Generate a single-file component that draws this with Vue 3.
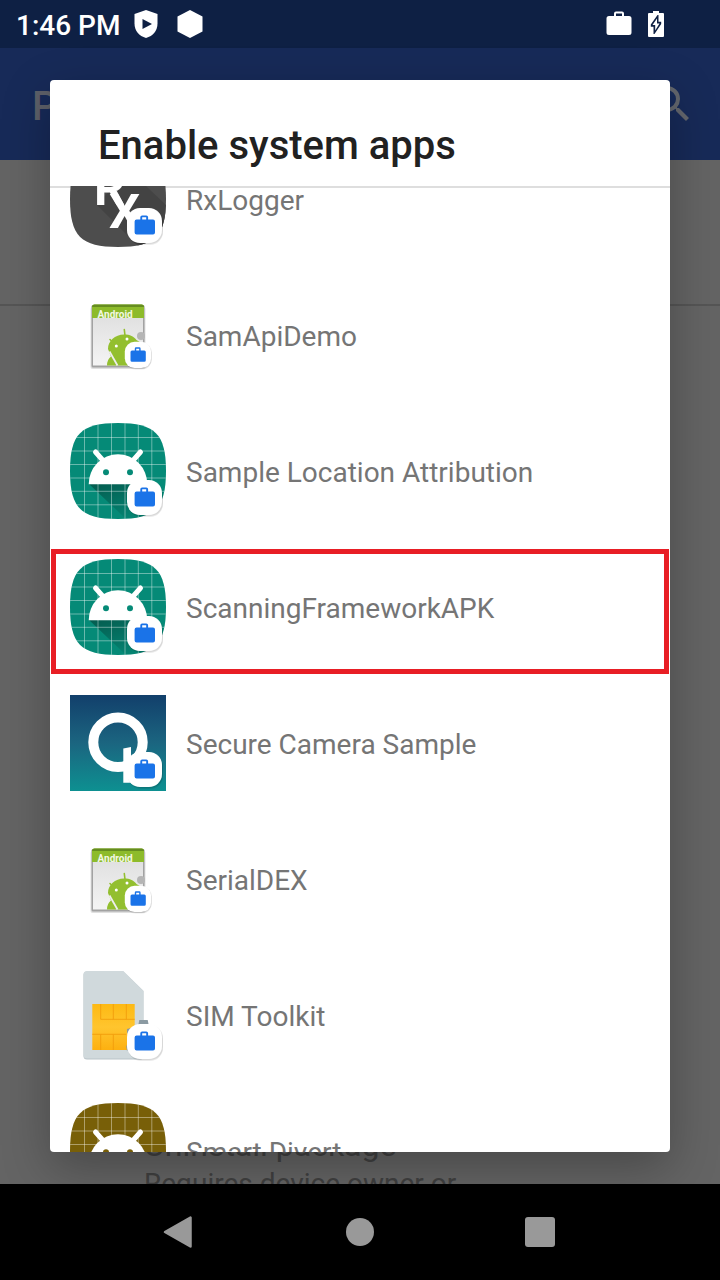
<script setup>
const apps = [
  { name: 'RxLogger', icon: 'rx' },
  { name: 'SamApiDemo', icon: 'doc' },
  { name: 'Sample Location Attribution', icon: 'robot', color: '#058a77' },
  { name: 'ScanningFrameworkAPK', icon: 'robot', color: '#058a77', marked: true },
  { name: 'Secure Camera Sample', icon: 'camera' },
  { name: 'SerialDEX', icon: 'doc' },
  { name: 'SIM Toolkit', icon: 'sim' },
  { name: 'Smart Divert', icon: 'robot', color: '#785f08' }
]
const gridLines = [14.5, 28, 41.5, 55, 68.3, 81.8]
</script>

<template>
  <div class="screen">
    <svg class="defs" aria-hidden="true">
      <defs>
        <clipPath id="squircle">
          <path d="M48 0C85 0 96 11 96 48S85 96 48 96 0 85 0 48 11 0 48 0Z" />
        </clipPath>
        <linearGradient id="castShade" x1="0" y1="0" x2="0.6" y2="1">
          <stop offset="0" stop-color="#000" stop-opacity="0.34" />
          <stop offset="1" stop-color="#000" stop-opacity="0.04" />
        </linearGradient>
        <linearGradient id="sea" x1="0" y1="0" x2="0" y2="1">
          <stop offset="0" stop-color="#123f6b" />
          <stop offset="0.5" stop-color="#1b6580" />
          <stop offset="1" stop-color="#0d9091" />
        </linearGradient>
        <linearGradient id="paper" x1="0" y1="0" x2="0" y2="1">
          <stop offset="0" stop-color="#dcdcdc" />
          <stop offset="1" stop-color="#f4f4f4" />
        </linearGradient>
        <linearGradient id="gold" x1="0" y1="0" x2="0" y2="1">
          <stop offset="0" stop-color="#fdb913" />
          <stop offset="0.5" stop-color="#ffc52e" />
          <stop offset="1" stop-color="#fdb010" />
        </linearGradient>
      </defs>
      <symbol id="badge" viewBox="0 0 40 40">
        <rect x="3" y="4" width="35" height="35" rx="13" fill="#000" opacity="0.08" />
        <rect x="3" y="3" width="35" height="35" rx="13" fill="#000" opacity="0.08" />
        <rect x="2" y="2" width="35" height="35" rx="13" fill="#fff" />
        <path d="M11 13.6h4.3v-2.4q0-1.8 1.8-1.8h4.2q1.8 0 1.8 1.8v2.4H28q2 0 2 2V26.6q0 2-2 2H11.6q-2 0-2-2V15.6q0-2 2-2ZM17.200 13.600h4v-2.300h-4Z" fill="#1a73e8" fill-rule="evenodd" />
      </symbol>
    </svg>

    <header class="status">
      <span class="clock">1:46 PM</span>
      <svg class="glyph" viewBox="0 0 28 28">
        <path d="M14 0 25.500 4v9.500C25.500 20.500 21 26 14 28 7 26 2.500 20.500 2.500 13.500V4Z" fill="#fff" />
        <path d="m10.500 9 9.500 5-9.500 5Z" fill="#0e2044" />
      </svg>
      <svg class="glyph hex" viewBox="0 0 28 28">
        <path d="M14 0 26.500 6.500v15L14 28 1.500 21.500v-15Z" fill="#fff" />
      </svg>
      <span class="spacer"></span>
      <svg class="glyph" viewBox="0 0 28 28">
        <path d="M3 6h6V3.500Q9 1.500 11 1.500h6q2 0 2 2V6h5q2.500 0 2.500 2.500v14Q26.500 25 24 25H4Q1.500 25 1.500 22.500v-14Q1.500 6 4 6ZM11 6h6V3.500h-6Z" fill="#fff" fill-rule="evenodd" />
      </svg>
      <svg class="glyph battery" viewBox="0 0 28 28">
        <path d="M7 3h4V1h6v2h4q1 0 1 1v22q0 1-1 1H7q-1 0-1-1V4q0-1 1-1Z" fill="#fff" />
        <path d="M15.500 5 8.800 14.500v2.300h2.700v7.200h1L19.200 14v-2.300h-2.700V5Z" fill="#0e2044" />
        <path d="M15 8.500 10.500 15h2.700v5.500L17.500 13.500H15Z" fill="#fff" />
      </svg>
    </header>

    <div class="appbar">
      <span class="bar-title">Policy Management</span>
      <button class="search" type="button" aria-label="Search">
        <svg viewBox="0 0 24 24">
          <path d="M15.500 14h-.79l-.28-.27A6.471 6.471 0 0 0 16 9.500 6.500 6.500 0 1 0 9.500 16c1.610 0 3.090-.59 4.230-1.570l.27.28v.79l5 4.990L20.490 19l-4.990-5Zm-6 0a4.500 4.500 0 1 1 0-9 4.500 4.500 0 0 1 0 9Z" fill="#63666d" />
        </svg>
      </button>
    </div>

    <main class="behind">
      <div class="band"></div>
      <div class="setting">
        <div class="setting-name">Uninstall package</div>
        <div class="setting-note">Requires device owner or</div>
      </div>
    </main>

    <section class="dialog" role="dialog" aria-labelledby="dialog-title">
      <h1 id="dialog-title">Enable system apps</h1>
      <div class="viewport">
        <ul class="list">
          <li v-for="app in apps" :key="app.name">
            <button type="button" class="row" :class="{ marked: app.marked }">
              <svg class="icon" viewBox="0 0 96 96" aria-hidden="true">
                <g v-if="app.icon === 'robot'">
                  <g clip-path="url(#squircle)">
                    <rect width="96" height="96" :fill="app.color" />
                    <path d="M19 61 56 96H84L77 61Z" fill="url(#castShade)" />
                    <g stroke="#fff" stroke-opacity="0.5" stroke-width="0.8">
                      <path v-for="p in gridLines" :key="p" :d="`M${p} 0V96M0 ${p}H96`" />
                    </g>
                  </g>
                  <path d="M18.700 61.300a29.300 30 0 0 1 58.600 0Z" fill="#fff" />
                  <path d="m25.500 29 8 9M70.500 29l-8 9" stroke="#fff" stroke-width="5" stroke-linecap="round" />
                  <circle cx="36" cy="49.300" r="3" :fill="app.color" />
                  <circle cx="60" cy="49.300" r="3" :fill="app.color" />
                  <use href="#badge" x="55" y="55" width="40" height="40" />
                </g>

                <g v-else-if="app.icon === 'rx'">
                  <g clip-path="url(#squircle)">
                    <rect width="96" height="96" fill="#4d4d4d" />
                    <path d="M27 54 69 96H96V54L58 18Z" fill="#434343" />
                  </g>
                  <text x="24" y="54" class="rx" font-size="49">R</text>
                  <text x="39" y="77" class="rx" font-size="49">X</text>
                  <use href="#badge" x="55" y="55" width="40" height="40" />
                </g>

                <g v-else-if="app.icon === 'doc'">
                  <rect x="20.500" y="20" width="55" height="62" rx="2" fill="#000" opacity="0.12" />
                  <rect x="21.500" y="18" width="53" height="62.500" rx="1.500" fill="#a2a2a2" />
                  <rect x="23" y="19" width="50" height="59.500" fill="url(#paper)" />
                  <path d="M22 20q0-2.500 2.500-2.500h47q2.500 0 2.500 2.500v11H22Z" fill="#8dbb2b" />
                  <path d="M22 20q0-2.500 2.500-2.500h47q2.500 0 2.500 2.500Z" fill="#668d20" />
                  <text x="27.500" y="31" class="doc-name" font-size="10">Android</text>
                  <circle cx="71" cy="49" r="4" fill="#b5b5b5" />
                  <path d="M38 62C38 54 45 47.500 54 47.500c6 0 10 2 12.500 5.500L73 57v21.500H37q0-6 4-9Z" fill="#93bf2f" />
                  <path d="m39.500 64.500 8 14" stroke="#eee" stroke-width="1.800" />
                  <path d="m40 52.500 4 4M54.300 42.500l.7 6" stroke="#93bf2f" stroke-width="1.600" stroke-linecap="round" />
                  <circle cx="46.300" cy="59" r="1.500" fill="#fff" />
                  <circle cx="57" cy="52" r="1.500" fill="#fff" />
                  <use href="#badge" x="53.300" y="53.300" width="30" height="30" />
                </g>

                <g v-else-if="app.icon === 'camera'">
                  <rect width="96" height="96" fill="url(#sea)" />
                  <circle cx="48" cy="47.300" r="24.700" fill="none" stroke="#fff" stroke-width="10" />
                  <path d="M53.300 53.500 61 52v35.700h-7.700Z" fill="#fff" />
                  <use href="#badge" x="55" y="55" width="40" height="40" />
                </g>

                <g v-else>
                  <path d="M17 4.500H53.300L73.500 24v65q0 3.500-3.500 3.500H17q-3.500 0-3.500-3.500V8q0-3.500 3.500-3.500Z" fill="#b9c3c8" />
                  <path d="M17 4H53.300L73.300 23.700V88q0 3.500-3.500 3.500H17q-3.500 0-3.500-3.500V7.500Q13.500 4 17 4Z" fill="#d0d9dc" />
                  <rect x="22.300" y="37" width="42.400" height="46" fill="url(#gold)" />
                  <path d="M30.700 37v15.300h34M43.300 37v15.300M56.300 37v15.300M22.300 67.300h34M30.700 67.300V83M43.300 67.300V83" fill="none" stroke="#f29d0c" stroke-width="0.900" />
                  <path d="M69.300 53h8.400l1 5h-10.400ZM57 62l4-1-4 6ZM56 78l3 4-2 2Z" fill="#8b9aa2" />
                  <use href="#badge" x="55" y="55" width="40" height="40" />
                </g>
              </svg>
              <span class="label">{{ app.name }}</span>
            </button>
          </li>
        </ul>
      </div>
    </section>

    <nav class="navbar">
      <button type="button" aria-label="Back">
        <svg viewBox="0 0 40 40"><path d="M5 20 30.500 5.500v29Z" fill="#999" stroke="#999" stroke-width="2.500" stroke-linejoin="round" /></svg>
      </button>
      <button type="button" aria-label="Home">
        <svg viewBox="0 0 40 40"><circle cx="20" cy="20" r="14" fill="#999" /></svg>
      </button>
      <button type="button" aria-label="Overview">
        <svg viewBox="0 0 40 40"><rect x="5" y="5" width="30" height="30" rx="3" fill="#999" /></svg>
      </button>
    </nav>
  </div>
</template>

<style>
body {
  margin: 0;
  background: #000;
}
</style>

<style scoped>
.screen {
  position: relative;
  display: flex;
  flex-direction: column;
  height: 100vh;
  overflow: hidden;
  font-family: Roboto, "Noto Sans", sans-serif;
}
.defs {
  position: absolute;
  width: 0;
  height: 0;
}
button {
  border: 0;
  padding: 0;
  background: none;
  font: inherit;
  color: inherit;
}
.status {
  flex: none;
  display: flex;
  align-items: center;
  height: 48px;
  box-sizing: border-box;
  padding: 0 50px 0 16px;
  background: #0e2044;
  color: #fff;
}
.clock {
  font-size: 28px;
  font-weight: 500;
  line-height: 32px;
  margin-right: 12px;
  padding-top: 4px;
}
.glyph {
  width: 28px;
  height: 28px;
}
.hex {
  margin-left: 16px;
}
.battery {
  margin-left: 9px;
}
.spacer {
  flex: 1;
}
.appbar {
  flex: none;
  display: flex;
  align-items: center;
  justify-content: space-between;
  height: 112px;
  box-sizing: border-box;
  padding: 0 24px 0 32px;
  background: #172a58;
}
.bar-title {
  padding-top: 4px;
  font-size: 40px;
  font-weight: 500;
  color: #5d6069;
}
.search,
.search svg {
  display: block;
  width: 48px;
  height: 48px;
}
.behind {
  flex: 1;
  min-height: 0;
  display: flex;
  flex-direction: column;
  justify-content: space-between;
  overflow: hidden;
  background: #646464;
}
.band {
  height: 144px;
  border-bottom: 2px solid #555;
}
.setting {
  height: 61px;
  padding-left: 144px;
  color: #404040;
}
.setting-name {
  font-size: 32px;
  line-height: 44px;
}
.setting-note {
  font-size: 28px;
  line-height: 34px;
}
.dialog {
  position: absolute;
  inset: 80px 50px 128px;
  display: flex;
  flex-direction: column;
  overflow: hidden;
  border-radius: 4px;
  background: #fff;
  box-shadow: 0 16px 48px rgba(0, 0, 0, 0.28);
}
h1 {
  flex: none;
  margin: 0;
  padding: 42px 48px 16px;
  font-size: 40px;
  line-height: 48px;
  font-weight: 500;
  color: #212121;
}
.viewport {
  flex: 1;
  min-height: 0;
  overflow: hidden;
  box-shadow: inset 0 2px #dedede;
}
.list {
  margin: -55px 0 0;
  padding: 0;
  list-style: none;
}
.row {
  position: relative;
  display: flex;
  align-items: center;
  gap: 20px;
  width: 100%;
  height: 136px;
  padding: 0 20px;
  text-align: left;
}
.marked::after {
  content: "";
  position: absolute;
  inset: 10px 1px 1px;
  border: 5px solid #e81e25;
}
.icon {
  flex: none;
  width: 96px;
  height: 96px;
}
.label {
  font-size: 28px;
  line-height: 32px;
  color: #757575;
  padding-top: 4px;
}
.rx {
  font-weight: 700;
  fill: #fff;
}
.doc-name {
  font-weight: 700;
  fill: #f3f8e4;
}
.navbar {
  flex: none;
  display: flex;
  align-items: center;
  justify-content: center;
  gap: 140px;
  height: 96px;
  background: #000;
}
.navbar button,
.navbar svg {
  display: block;
  width: 40px;
  height: 40px;
}
</style>
